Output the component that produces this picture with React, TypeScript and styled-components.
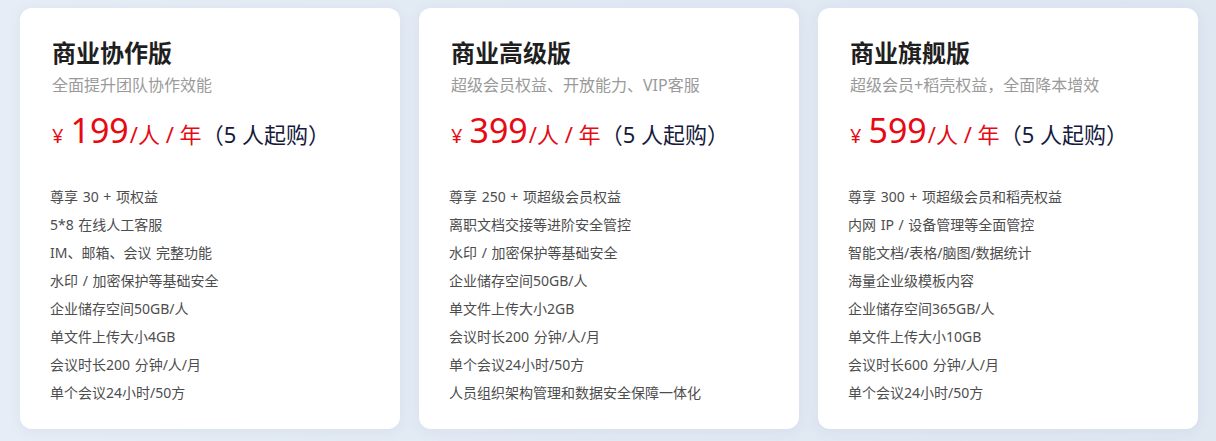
import React from "react";
import styled, { createGlobalStyle } from "styled-components";

const GlobalStyle = createGlobalStyle`
  html, body {
    margin: 0;
    padding: 0;
    background: #e3ebf4;
  }
  body {
    font-family: "Noto Sans", "Noto Sans CJK SC", sans-serif;
  }
`;

const Page = styled.div`
  width: 1216px;
  height: 441px;
  box-sizing: border-box;
  padding: 8px 18px 0 20px;
  background: linear-gradient(90deg, #e6edf6 0%, #e1e9f3 50%, #dfe7f1 100%);
  display: grid;
  grid-template-columns: repeat(3, 380px);
  column-gap: 19px;
  align-items: start;
`;

const Card = styled.div`
  background: #ffffff;
  border-radius: 12px;
  height: 421px;
  box-sizing: border-box;
  padding: 28px 24px 22px 32px;
  box-shadow: 0 2px 12px rgba(160, 180, 210, 0.18);
  display: flex;
  flex-direction: column;
`;

const Title = styled.div`
  font-size: 24px;
  line-height: 33px;
  font-weight: 700;
  color: #1f1f1f;
`;

const Subtitle = styled.div`
  margin-top: 5px;
  font-size: 16px;
  line-height: 22px;
  color: #9a9a9a;
`;

const PriceLine = styled.div`
  margin-top: 14px;
  height: 40px;
  line-height: 40px;
  white-space: nowrap;
  display: flex;
  align-items: baseline;
`;

const Currency = styled.span`
  font-size: 20px;
  color: #e60a13;
  margin-right: 7px;
`;

const Amount = styled.span`
  font-size: 34px;
  color: #e60a13;
  margin-right: 1px;
`;

const Unit = styled.span`
  font-size: 22px;
  color: #e60a13;
  white-space: pre;
`;

const Note = styled.span`
  font-size: 22px;
  color: #151a3d;
  white-space: pre;
`;

const Features = styled.ul`
  list-style: none;
  margin: 33px 0 0 -2px;
  padding: 0;
`;

const Feature = styled.li`
  font-size: 14px;
  line-height: 28px;
  color: #4d4d4d;
  white-space: pre;
  word-spacing: 1px;
`;

type Plan = {
  title: string;
  subtitle: string;
  price: string;
  features: string[];
};

const plans: Plan[] = [
  {
    title: "商业协作版",
    subtitle: "全面提升团队协作效能",
    price: "199",
    features: [
      "尊享 30 + 项权益",
      "5*8 在线人工客服",
      "IM、邮箱、会议 完整功能",
      "水印 / 加密保护等基础安全",
      "企业储存空间50GB/人",
      "单文件上传大小4GB",
      "会议时长200 分钟/人/月",
      "单个会议24小时/50方",
    ],
  },
  {
    title: "商业高级版",
    subtitle: "超级会员权益、开放能力、VIP客服",
    price: "399",
    features: [
      "尊享 250 + 项超级会员权益",
      "离职文档交接等进阶安全管控",
      "水印 / 加密保护等基础安全",
      "企业储存空间50GB/人",
      "单文件上传大小2GB",
      "会议时长200 分钟/人/月",
      "单个会议24小时/50方",
      "人员组织架构管理和数据安全保障一体化",
    ],
  },
  {
    title: "商业旗舰版",
    subtitle: "超级会员+稻壳权益，全面降本增效",
    price: "599",
    features: [
      "尊享 300 + 项超级会员和稻壳权益",
      "内网 IP / 设备管理等全面管控",
      "智能文档/表格/脑图/数据统计",
      "海量企业级模板内容",
      "企业储存空间365GB/人",
      "单文件上传大小10GB",
      "会议时长600 分钟/人/月",
      "单个会议24小时/50方",
    ],
  },
];

export default function App() {
  return (
    <>
      <GlobalStyle />
      <Page>
        {plans.map((p) => (
          <Card key={p.title}>
            <Title>{p.title}</Title>
            <Subtitle>{p.subtitle}</Subtitle>
            <PriceLine>
              <Currency>¥</Currency>
              <Amount>{p.price}</Amount>
              <Unit>/人 / 年</Unit>
              <Note>（5 人起购）</Note>
            </PriceLine>
            <Features>
              {p.features.map((f) => (
                <Feature key={f}>{f}</Feature>
              ))}
            </Features>
          </Card>
        ))}
      </Page>
    </>
  );
}
